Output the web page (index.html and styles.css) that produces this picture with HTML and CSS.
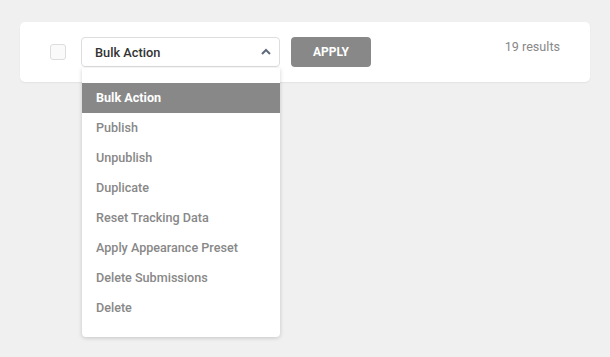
FILE: index.html
```html
<!DOCTYPE html>
<html>
<head>
<meta charset="utf-8">
<link rel="stylesheet" href="styles.css">
</head>
<body>
<main class="page">
<div class="card">
  <span class="checkbox"></span>
  <div class="select-wrap">
    <div class="select">
      <span class="select-label">Bulk Action</span>
      <svg class="chevron" width="10" height="7" viewBox="0 0 10 7"><path d="M1 6 L5 2 L9 6" fill="none" stroke="#5f6b7a" stroke-width="2"/></svg>
    </div>
    <ul class="menu">
      <li class="item active">Bulk Action</li>
      <li class="item">Publish</li>
      <li class="item">Unpublish</li>
      <li class="item">Duplicate</li>
      <li class="item">Reset Tracking Data</li>
      <li class="item">Apply Appearance Preset</li>
      <li class="item">Delete Submissions</li>
      <li class="item">Delete</li>
    </ul>
  </div>
  <button class="apply">APPLY</button>
  <span class="results">19 results</span>
</div>
</main>
</body>
</html>
```

FILE: styles.css
```css
html, body {
  margin: 0;
  padding: 0;
  background: #f0f0f0;
  font-family: Roboto, "Liberation Sans", sans-serif;
}
.page {
  display: block;
  min-height: 357px;
  box-sizing: border-box;
  padding: 22px 20px 0 20px;
}
.card {
  width: 570px;
  height: 60px;
  box-sizing: border-box;
  background: #fff;
  border-radius: 5px;
  box-shadow: 0 1px 2px rgba(0,0,0,0.06);
  display: flex;
  align-items: flex-start;
  padding: 15px 30px 0 30px;
}
.checkbox {
  width: 14px;
  height: 14px;
  border: 1px solid #ddd;
  border-radius: 3px;
  background: #fafafa;
  margin-top: 7px;
  margin-right: 15px;
  flex: none;
}
.select-wrap {
  position: relative;
  width: 199px;
  flex: none;
  z-index: 5;
}
.select {
  height: 30px;
  box-sizing: border-box;
  border: 1px solid #ddd;
  border-radius: 4px;
  display: flex;
  align-items: center;
  justify-content: space-between;
  padding: 0 8px 0 13px;
  background: #fff;
}
.select-label {
  font-size: 12.8px;
  font-weight: 500;
  color: #333;
}
.chevron {
  display: block;
  margin-top: -2px;
}
.menu {
  position: absolute;
  left: 1px;
  top: 31px;
  width: 198px;
  margin: 0;
  padding: 15px 0 14px 0;
  list-style: none;
  background: #fff;
  border-radius: 0 0 4px 4px;
  box-shadow: 0 1px 4px rgba(0,0,0,0.18);
  z-index: 2;
}
.item {
  display: block;
  height: 30px;
  line-height: 30px;
  padding: 0 14px;
  font-size: 12.6px;
  font-weight: 500;
  color: #888;
}
.item.active {
  background: #888;
  color: #fff;
  font-weight: 700;
}
.apply {
  margin-left: 11px;
  width: 80px;
  height: 30px;
  border: 0;
  border-radius: 4px;
  background: #888;
  color: #fff;
  font-family: Roboto, "Liberation Sans", sans-serif;
  font-size: 12px;
  font-weight: 700;
  padding: 0;
  flex: none;
}
.results {
  margin-left: auto;
  font-size: 12.6px;
  color: #888;
  line-height: 20px;
}
```
